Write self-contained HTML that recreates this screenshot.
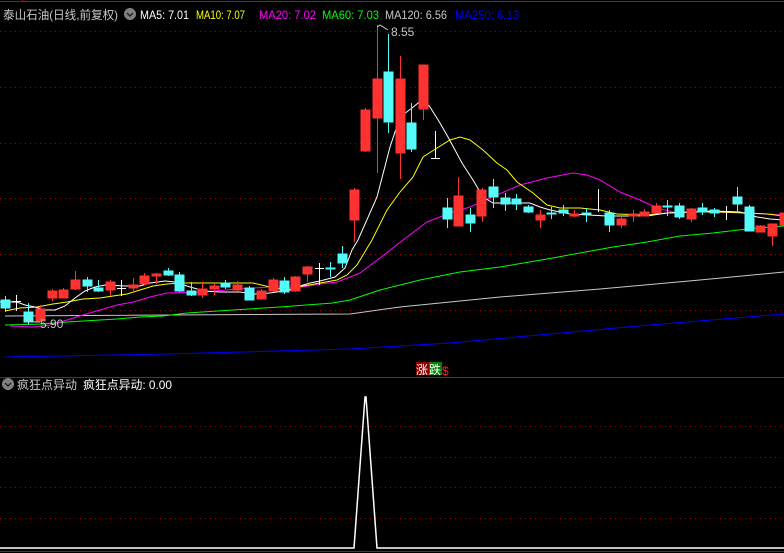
<!DOCTYPE html>
<html><head><meta charset="utf-8"><style>
html,body{margin:0;padding:0;background:#000;width:784px;height:553px;overflow:hidden}
svg{display:block}
text{font-family:"Liberation Sans","Noto Sans CJK SC",sans-serif;font-size:12px}
</style></head><body>
<svg width="784" height="553" viewBox="0 0 784 553" xmlns="http://www.w3.org/2000/svg" shape-rendering="crispEdges">
<rect width="784" height="553" fill="#000"/>
<line x1="0" y1="1.5" x2="784" y2="1.5" stroke="#c00" stroke-width="1"/>
<line x1="22.5" y1="0" x2="22.5" y2="2" stroke="#c00"/>
<g stroke="#a00000" stroke-width="1" stroke-dasharray="1 4">
<line x1="0" y1="31.5" x2="784" y2="31.5"/><line x1="0" y1="87.5" x2="784" y2="87.5"/>
<line x1="0" y1="143.5" x2="784" y2="143.5"/><line x1="0" y1="198.5" x2="784" y2="198.5"/>
<line x1="0" y1="254.5" x2="784" y2="254.5"/><line x1="0" y1="310.5" x2="784" y2="310.5"/>
<line x1="0" y1="426.5" x2="784" y2="426.5"/><line x1="0" y1="457.5" x2="784" y2="457.5"/>
<line x1="0" y1="487.5" x2="784" y2="487.5"/><line x1="0" y1="518.5" x2="784" y2="518.5"/>
</g>
<line x1="0" y1="377.5" x2="784" y2="377.5" stroke="#c00"/>
<line x1="0" y1="551.5" x2="784" y2="551.5" stroke="#c00"/>
<g fill="none" stroke-width="1" shape-rendering="auto">
<polyline stroke="#0000ff" points="5,357 167,354 350,349 450,343 550,334 650,325 784,314"/>
<polyline stroke="#c8c8c8" points="5,316 350,314 400,307 500,297 600,289 700,280 784,272"/>
<polyline stroke="#00ff00" points="5,325 43,324 67,322 117,319 140,317 163,316 187,313 233,310 280,307 333,303 350,300 380,290 420,280 460,272 500,267 547,259 580,253 613,247 647,242 680,236 713,233 747,229 784,226"/>
<polyline stroke="#ff00ff" points="10,326 33,327 50,325 67,320 83,315 100,310 117,305 133,302 150,297 167,293 203,292 237,289 270,287 303,287 320,284 337,282 350,277 360,273 380,258 403,240 427,222 450,213 470,207 490,198 520,185 547,178 573,173 587,175 600,180 620,192 640,200 657,208 673,212 713,212 747,213 784,215"/>
<polyline stroke="#ffff00" points="5,311 20,308 37,307 53,304 67,302 83,299 100,298 113,296 127,294 140,290 153,286 167,284 180,283 253,283 270,287 287,290 303,286 320,283 337,280 347,275 357,265 372,240 387,210 400,192 413,177 423,157 437,148 450,140 460,137 470,140 483,150 497,163 507,170 517,182 533,193 547,205 560,208 580,208 600,210 617,214 647,215 667,213 693,212 720,212 747,213 767,214 784,216"/>
<polyline stroke="#ffffff" points="0,302 17,302 25,305 35,307 45,310 55,310 65,306 75,298 85,291 95,287 105,285 125,286 140,286 150,283 165,281 175,282 190,287 205,291 220,292 240,292 255,294 270,293 290,290 300,286 310,283 320,281 335,277 345,268 352,250 358,240 377,197 390,147 400,117 412,108 423,99 430,107 440,123 448,137 462,163 473,180 483,197 493,203 530,203 540,207 550,210 570,214 607,216 647,216 667,213 713,211 740,212 757,217 770,219 784,220"/>
</g>
<g stroke-width="1">
<g stroke="#54fcfc" fill="#54fcfc">
<line x1="5.5" y1="296" x2="5.5" y2="312"/><rect x="1" y="300" width="9" height="8"/>
<line x1="28.5" y1="303" x2="28.5" y2="325"/><rect x="24" y="312" width="9" height="10"/>
<line x1="87.5" y1="277" x2="87.5" y2="292"/><rect x="83" y="280" width="9" height="6"/>
<line x1="98.5" y1="280" x2="98.5" y2="292"/><rect x="94" y="288" width="9" height="3"/>
<line x1="168.5" y1="268" x2="168.5" y2="276"/><rect x="164" y="271" width="9" height="4"/>
<line x1="179.5" y1="272" x2="179.5" y2="292"/><rect x="175" y="275" width="9" height="16"/>
<line x1="191.5" y1="282" x2="191.5" y2="296"/><rect x="187" y="291" width="9" height="4"/>
<line x1="225.5" y1="280" x2="225.5" y2="289"/><rect x="221" y="283" width="9" height="4"/>
<line x1="249.5" y1="286" x2="249.5" y2="300"/><rect x="245" y="288" width="9" height="12"/>
<line x1="284.5" y1="277" x2="284.5" y2="294"/><rect x="280" y="281" width="9" height="11"/>
<line x1="330.5" y1="262" x2="330.5" y2="277"/><rect x="326" y="268" width="9" height="1"/>
<line x1="342.5" y1="246" x2="342.5" y2="268"/><rect x="338" y="254" width="9" height="9"/>
<line x1="388.5" y1="34" x2="388.5" y2="133"/><rect x="384" y="72" width="9" height="50"/>
<line x1="411.5" y1="103" x2="411.5" y2="152"/><rect x="407" y="123" width="9" height="26"/>
<line x1="447.5" y1="198" x2="447.5" y2="228"/><rect x="443" y="208" width="9" height="11"/>
<line x1="470.5" y1="208" x2="470.5" y2="232"/><rect x="466" y="215" width="9" height="8"/>
<line x1="493.5" y1="179" x2="493.5" y2="208"/><rect x="489" y="187" width="9" height="10"/>
<line x1="505.5" y1="193" x2="505.5" y2="211"/><rect x="501" y="198" width="9" height="6"/>
<line x1="516.5" y1="194" x2="516.5" y2="210"/><rect x="512" y="199" width="9" height="5"/>
<line x1="528.5" y1="205" x2="528.5" y2="213"/><rect x="524" y="207" width="9" height="5"/>
<line x1="551.5" y1="207" x2="551.5" y2="219"/><rect x="547" y="213" width="9" height="1"/>
<line x1="563.5" y1="205" x2="563.5" y2="216"/><rect x="559" y="210" width="9" height="3"/>
<line x1="586.5" y1="208" x2="586.5" y2="222"/><rect x="582" y="213" width="9" height="1"/>
<line x1="609.5" y1="210" x2="609.5" y2="232"/><rect x="605" y="213" width="9" height="12"/>
<line x1="667.5" y1="200" x2="667.5" y2="216"/><rect x="663" y="206" width="9" height="1"/>
<line x1="679.5" y1="203" x2="679.5" y2="219"/><rect x="675" y="206" width="9" height="11"/>
<line x1="702.5" y1="203" x2="702.5" y2="215"/><rect x="698" y="208" width="9" height="4"/>
<line x1="714.5" y1="208" x2="714.5" y2="217"/><rect x="710" y="210" width="9" height="3"/>
<line x1="737.5" y1="187" x2="737.5" y2="213"/><rect x="733" y="197" width="9" height="7"/>
<line x1="749.5" y1="205" x2="749.5" y2="231"/><rect x="745" y="207" width="9" height="24"/>
</g>
<g stroke="#ff3232" fill="#ff3232">
<line x1="40.5" y1="305" x2="40.5" y2="322"/><rect x="36" y="309" width="9" height="12"/>
<line x1="52.5" y1="289" x2="52.5" y2="301"/><rect x="48" y="291" width="9" height="7"/>
<line x1="63.5" y1="288" x2="63.5" y2="298"/><rect x="59" y="290" width="9" height="8"/>
<line x1="75.5" y1="271" x2="75.5" y2="290"/><rect x="71" y="280" width="9" height="9"/>
<line x1="110.5" y1="280" x2="110.5" y2="296"/><rect x="106" y="282" width="9" height="8"/>
<line x1="133.5" y1="278" x2="133.5" y2="293"/><rect x="129" y="285" width="9" height="3"/>
<line x1="144.5" y1="273" x2="144.5" y2="285"/><rect x="140" y="276" width="9" height="8"/>
<line x1="156.5" y1="273" x2="156.5" y2="284"/><rect x="152" y="274" width="9" height="2"/>
<line x1="202.5" y1="282" x2="202.5" y2="298"/><rect x="198" y="289" width="9" height="6"/>
<line x1="214.5" y1="283" x2="214.5" y2="295"/><rect x="210" y="286" width="9" height="3"/>
<line x1="237.5" y1="281" x2="237.5" y2="291"/><rect x="233" y="285" width="9" height="5"/>
<line x1="261.5" y1="289" x2="261.5" y2="300"/><rect x="257" y="291" width="9" height="8"/>
<line x1="273.5" y1="278" x2="273.5" y2="292"/><rect x="269" y="280" width="9" height="11"/>
<line x1="295.5" y1="276" x2="295.5" y2="292"/><rect x="291" y="277" width="9" height="14"/>
<line x1="307.5" y1="266" x2="307.5" y2="282"/><rect x="303" y="267" width="9" height="7"/>
<line x1="354.5" y1="188" x2="354.5" y2="242"/><rect x="350" y="190" width="9" height="30"/>
<line x1="365.5" y1="108" x2="365.5" y2="152"/><rect x="361" y="110" width="9" height="41"/>
<line x1="377.5" y1="25" x2="377.5" y2="173"/><rect x="373" y="79" width="9" height="39"/>
<line x1="400.5" y1="56" x2="400.5" y2="179"/><rect x="396" y="79" width="9" height="74"/>
<line x1="423.5" y1="65" x2="423.5" y2="120"/><rect x="419" y="65" width="9" height="44"/>
<line x1="458.5" y1="177" x2="458.5" y2="226"/><rect x="454" y="196" width="9" height="30"/>
<line x1="482.5" y1="188" x2="482.5" y2="222"/><rect x="477" y="190" width="9" height="26"/>
<line x1="540.5" y1="210" x2="540.5" y2="228"/><rect x="536" y="215" width="9" height="5"/>
<line x1="574.5" y1="210" x2="574.5" y2="217"/><rect x="570" y="214" width="9" height="2"/>
<line x1="621.5" y1="217" x2="621.5" y2="228"/><rect x="617" y="219" width="9" height="6"/>
<line x1="633.5" y1="210" x2="633.5" y2="222"/><rect x="629" y="214" width="9" height="2"/>
<line x1="644.5" y1="209" x2="644.5" y2="216"/><rect x="640" y="212" width="9" height="4"/>
<line x1="656.5" y1="203" x2="656.5" y2="213"/><rect x="652" y="206" width="9" height="7"/>
<line x1="691.5" y1="208" x2="691.5" y2="222"/><rect x="687" y="209" width="9" height="10"/>
<line x1="760.5" y1="225" x2="760.5" y2="232"/><rect x="756" y="226" width="9" height="6"/>
<line x1="772.5" y1="224" x2="772.5" y2="246"/><rect x="768" y="224" width="9" height="12"/>
<rect x="780" y="213" width="5" height="12"/>
</g>
<g stroke="#ffffff" fill="#ffffff">
<line x1="16.5" y1="295" x2="16.5" y2="311"/><line x1="12" y1="301.5" x2="21" y2="301.5"/>
<line x1="121.5" y1="280" x2="121.5" y2="296"/><line x1="117" y1="288.5" x2="126" y2="288.5"/>
<line x1="319.5" y1="263" x2="319.5" y2="285"/><line x1="315" y1="268.5" x2="324" y2="268.5"/>
<line x1="435.5" y1="131" x2="435.5" y2="158"/><line x1="431" y1="158.5" x2="440" y2="158.5"/>
<line x1="598.5" y1="189" x2="598.5" y2="212"/>
<line x1="726.5" y1="206" x2="726.5" y2="220"/><line x1="722" y1="211.5" x2="731" y2="211.5"/>
</g>
</g>
<polyline points="377,27 380,25 388,30" fill="none" stroke="#c8c8c8" shape-rendering="auto"/>
<text x="391" y="36" fill="#c8c8c8" font-size="13">8.55</text>
<polyline points="28,320 35,322 40,322" fill="none" stroke="#c8c8c8" shape-rendering="auto"/>
<text x="40" y="328" fill="#c8c8c8" font-size="13">5.90</text>
<text x="3" y="19" fill="#c8c8c8" font-size="13" textLength="115" lengthAdjust="spacingAndGlyphs">泰山石油(日线,前复权)</text>
<circle cx="130" cy="14" r="6" fill="#808080"/>
<polyline points="127,13 130,16 133,13" fill="none" stroke="#222" stroke-width="1.5" shape-rendering="auto"/>
<g font-size="13">
<text x="140" y="19" fill="#ffffff" textLength="49" lengthAdjust="spacingAndGlyphs">MA5: 7.01</text>
<text x="196" y="19" fill="#ffff00" textLength="49" lengthAdjust="spacingAndGlyphs">MA10: 7.07</text>
<text x="259" y="19" fill="#ff00ff" textLength="57" lengthAdjust="spacingAndGlyphs">MA20: 7.02</text>
<text x="322" y="19" fill="#00ff00" textLength="57" lengthAdjust="spacingAndGlyphs">MA60: 7.03</text>
<text x="385" y="19" fill="#c8c8c8" textLength="62" lengthAdjust="spacingAndGlyphs">MA120: 6.56</text>
<text x="455" y="19" fill="#0000ff" textLength="64" lengthAdjust="spacingAndGlyphs">MA250: 6.13</text>
</g>
<rect x="416" y="362" width="13" height="13" fill="#8b0000"/>
<rect x="429" y="362" width="13" height="13" fill="#008000"/>
<text x="416" y="374" fill="#fff" font-size="12">涨</text>
<text x="429" y="374" fill="#fff" font-size="12">跌</text>
<text x="442" y="375" fill="#ff2020" font-size="11">$</text>
<circle cx="8" cy="384" r="6" fill="#808080"/>
<polyline points="5,383 8,386 11,383" fill="none" stroke="#222" stroke-width="1.5" shape-rendering="auto"/>
<text x="17" y="389" fill="#c8c8c8" textLength="60" lengthAdjust="spacingAndGlyphs">疯狂点异动</text>
<text x="83" y="389" fill="#ffffff" textLength="89" lengthAdjust="spacingAndGlyphs">疯狂点异动: 0.00</text>
<polyline points="0,548 354,548 365,397 366,397 377,548 784,548" fill="none" stroke="#ffffff" stroke-width="1.5" shape-rendering="auto"/>
</svg>
</body></html>
